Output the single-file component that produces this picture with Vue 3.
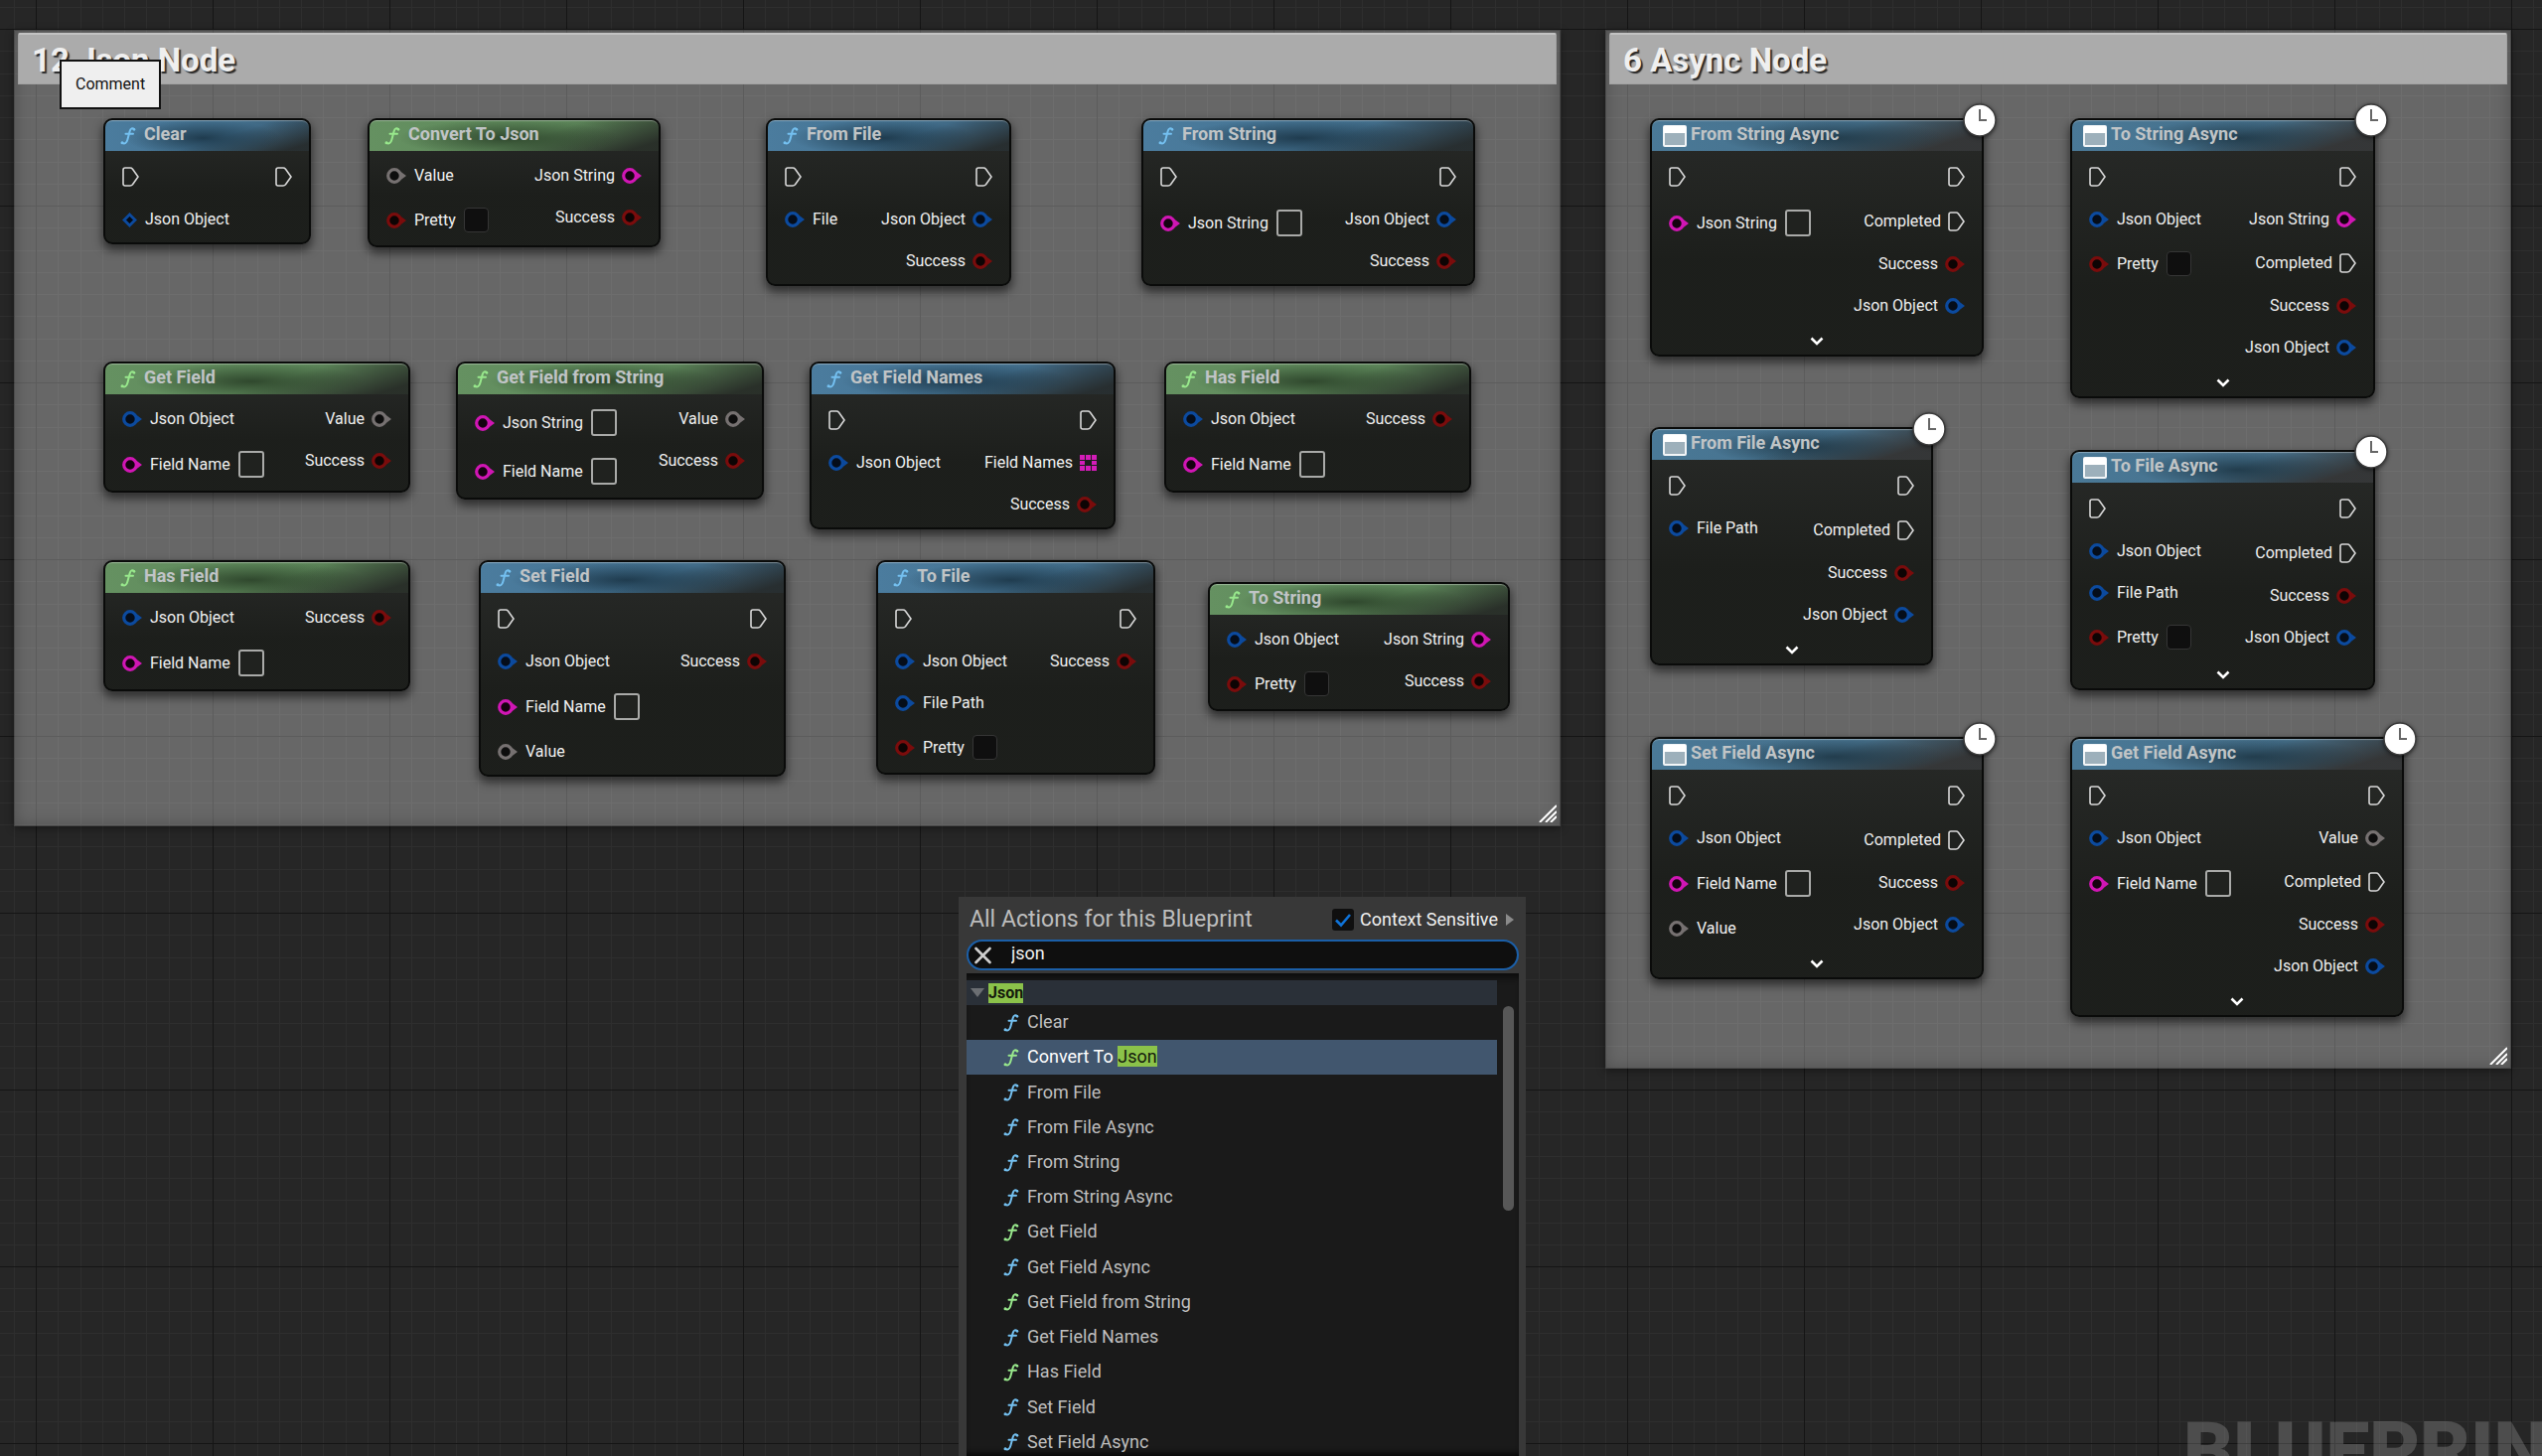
<script setup>
import { ref } from 'vue'

const comments = [
  { title: '12 Json Node', x: 14, y: 30, w: 1557, h: 802 },
  { title: '6 Async Node', x: 1616, y: 30, w: 912, h: 1046 },
]

const exec = { kind: 'exec' }
const done = { kind: 'exec', label: 'Completed' }
const object = { kind: 'object', label: 'Json Object' }
const value = { kind: 'wild', label: 'Value' }
const success = { kind: 'bool', label: 'Success' }
const jsonOut = { kind: 'string', label: 'Json String' }
const jsonIn = { kind: 'string', label: 'Json String', control: 'text' }
const fieldName = { kind: 'string', label: 'Field Name', control: 'text' }
const filePath = { kind: 'object', label: 'File Path' }
const pretty = { kind: 'bool', label: 'Pretty', control: 'check' }

const nodes = [
  { title: 'Clear', tone: 'blue', x: 104, y: 119, w: 209, ins: [exec, { kind: 'reference', label: 'Json Object' }], outs: [exec] },
  { title: 'Convert To Json', tone: 'green', x: 370, y: 119, w: 295, ins: [value, pretty], outs: [jsonOut, success] },
  { title: 'From File', tone: 'blue', x: 771, y: 119, w: 247, ins: [exec, { kind: 'object', label: 'File' }], outs: [exec, object, success] },
  { title: 'From String', tone: 'blue', x: 1149, y: 119, w: 336, ins: [exec, jsonIn], outs: [exec, object, success] },
  { title: 'Get Field', tone: 'green', x: 104, y: 364, w: 309, ins: [object, fieldName], outs: [value, success] },
  { title: 'Get Field from String', tone: 'green', x: 459, y: 364, w: 310, ins: [jsonIn, fieldName], outs: [value, success] },
  { title: 'Get Field Names', tone: 'blue', x: 815, y: 364, w: 308, ins: [exec, object], outs: [exec, { kind: 'array', label: 'Field Names' }, success] },
  { title: 'Has Field', tone: 'green', x: 1172, y: 364, w: 309, ins: [object, fieldName], outs: [success] },
  { title: 'Has Field', tone: 'green', x: 104, y: 564, w: 309, ins: [object, fieldName], outs: [success] },
  { title: 'Set Field', tone: 'blue', x: 482, y: 564, w: 309, ins: [exec, object, fieldName, value], outs: [exec, success] },
  { title: 'To File', tone: 'blue', x: 882, y: 564, w: 281, ins: [exec, object, filePath, pretty], outs: [exec, success] },
  { title: 'To String', tone: 'green', x: 1216, y: 586, w: 304, ins: [object, pretty], outs: [jsonOut, success] },
  { title: 'From String Async', tone: 'async', x: 1661, y: 119, w: 336, ins: [exec, jsonIn], outs: [exec, done, success, object] },
  { title: 'To String Async', tone: 'async', x: 2084, y: 119, w: 307, ins: [exec, object, pretty], outs: [exec, jsonOut, done, success, object] },
  { title: 'From File Async', tone: 'async', x: 1661, y: 430, w: 285, ins: [exec, filePath], outs: [exec, done, success, object] },
  { title: 'To File Async', tone: 'async', x: 2084, y: 453, w: 307, ins: [exec, object, filePath, pretty], outs: [exec, done, success, object] },
  { title: 'Set Field Async', tone: 'async', x: 1661, y: 742, w: 336, ins: [exec, object, fieldName, value], outs: [exec, done, success, object] },
  { title: 'Get Field Async', tone: 'async', x: 2084, y: 742, w: 336, ins: [exec, object, fieldName], outs: [exec, value, done, success, object] },
]

const sides = ['ins', 'outs']

const actions = [
  { name: 'Clear', tone: 'blue' },
  { name: 'Convert To ', hit: 'Json', tone: 'green', selected: true },
  { name: 'From File', tone: 'blue' },
  { name: 'From File Async', tone: 'blue' },
  { name: 'From String', tone: 'blue' },
  { name: 'From String Async', tone: 'blue' },
  { name: 'Get Field', tone: 'green' },
  { name: 'Get Field Async', tone: 'blue' },
  { name: 'Get Field from String', tone: 'green' },
  { name: 'Get Field Names', tone: 'blue' },
  { name: 'Has Field', tone: 'green' },
  { name: 'Set Field', tone: 'blue' },
  { name: 'Set Field Async', tone: 'blue' },
]

const query = ref('json')
const contextSensitive = ref(true)
const minor = [22, 45, 67, 89, 111, 134, 156]

const box = (o) => ({ left: o.x + 'px', top: o.y + 'px', width: o.w + 'px', height: o.h ? o.h + 'px' : null })
const rowClass = (pin) => pin.control ? 'row-' + pin.control : pin.kind !== 'exec' ? 'row-plain' : pin.label ? 'row-done' : 'row-exec'
</script>

<template>
  <main class="graph">
    <svg class="grid" aria-hidden="true">
      <defs>
        <pattern id="cells" x="36" y="29" width="178" height="178" patternUnits="userSpaceOnUse">
          <g fill="#2e2e2e">
            <rect v-for="m in minor" :key="'v' + m" :x="m" y="0" width="1" height="178" />
            <rect v-for="m in minor" :key="'h' + m" x="0" :y="m" width="178" height="1" />
          </g>
          <path d="M0 0H178V1H1V178H0Z" fill="#151515" />
        </pattern>
      </defs>
      <rect width="100%" height="100%" fill="url(#cells)" />
    </svg>

    <div class="watermark">BLUEPRINT</div>

    <section v-for="c in comments" :key="c.title" class="comment" :style="box(c)">
      <h2>{{ c.title }}</h2>
      <svg class="grip" viewBox="0 0 18 18" aria-hidden="true">
        <path d="M1 18 18 1M7 18 18 7M12 18 18 12" stroke="#fff" stroke-width="2" fill="none" />
      </svg>
    </section>

    <article v-for="(n, i) in nodes" :key="i" class="node" :class="n.tone" :style="box(n)">
      <header>
        <svg v-if="n.tone === 'async'" class="panel-icon" viewBox="0 0 24 22" aria-hidden="true">
          <rect x="1" y="1" width="22" height="20" rx="1" fill="#9db0bb" stroke="#f2f5f7" stroke-width="2" />
          <rect x="1" y="1" width="22" height="7" fill="#fff" />
        </svg>
        <svg v-else class="fn" viewBox="0 0 16 18" aria-hidden="true">
          <path d="M14 2.4C12.6.6 10.4 1 9.6 4.2L7.4 12.4C6.5 15.8 4.6 17.4 2 15.7M5.500 6.800H13" />
          <circle cx="14" cy="2.200" r="1.300" /><circle cx="2" cy="15.700" r="1.500" />
        </svg>
        <h3>{{ n.title }}</h3>
      </header>

      <div class="pins">
        <ul v-for="side in sides" :key="side" :class="side">
          <li v-for="(p, k) in n[side]" :key="k" :class="rowClass(p)">
            <svg v-if="p.kind === 'exec'" class="pin" width="17" height="20" viewBox="0 0 17 20">
              <path d="M1 3Q1 1 3 1H8Q9.500 1 10.500 2.200L16 10L10.500 17.800Q9.500 19 8 19H3Q1 19 1 17Z" fill="none" stroke="#d8d8d8" stroke-width="1.600" />
            </svg>
            <svg v-else-if="p.kind === 'reference'" class="pin" width="15" height="15" viewBox="0 0 15 15">
              <path d="M7.500 2 13 7.500 7.500 13 2 7.500Z" fill="#040a14" stroke="#0c4a9e" stroke-width="2.800" />
            </svg>
            <svg v-else-if="p.kind === 'array'" class="pin" width="17" height="16" viewBox="0 0 17 16">
              <path d="M0 0h5v5H0zM6 0h5v5H6zM12 0h5v5h-5zM0 6h5v4H0zM12 6h5v4h-5zM0 11h5v5H0zM6 11h5v5H6zM12 11h5v5h-5z" fill="#d41cb8" />
            </svg>
            <svg v-else class="pin" :class="p.kind" width="20" height="16" viewBox="0 0 20 16">
              <path d="M14 3.500 20 8 14 12.500Z" />
              <circle cx="8" cy="8" r="6.300" />
            </svg>
            <template v-if="p.label">
              <label v-if="p.control" :for="`pin-${i}-${k}`">{{ p.label }}</label>
              <span v-else>{{ p.label }}</span>
            </template>
            <input v-if="p.control === 'text'" :id="`pin-${i}-${k}`" type="text" class="text-box">
            <input v-if="p.control === 'check'" :id="`pin-${i}-${k}`" type="checkbox" class="tick">
          </li>
        </ul>
      </div>

      <template v-if="n.tone === 'async'">
        <button class="expand" type="button" aria-label="Show advanced pins">
          <svg width="14" height="9" viewBox="0 0 14 9"><path d="M1.500 1.500 7 7 12.500 1.500" fill="none" stroke="#fff" stroke-width="2.600" /></svg>
        </button>
        <svg class="clock" viewBox="0 0 34 34" aria-hidden="true">
          <circle cx="17" cy="17" r="16" fill="#fff" stroke="#3a3a3a" stroke-width="1.500" />
          <path d="M17 6V17H24" fill="none" stroke="#666" stroke-width="2" />
        </svg>
      </template>
    </article>

    <div class="tooltip" role="tooltip">Comment</div>

    <section class="palette">
      <div class="palette-head">
        <h1>All Actions for this Blueprint</h1>
        <input id="context" v-model="contextSensitive" type="checkbox">
        <label for="context">Context Sensitive</label>
        <button type="button" aria-label="Context options">
          <svg width="8" height="12" viewBox="0 0 8 12"><path d="M0 0 8 6 0 12Z" fill="#8a8a8a" /></svg>
        </button>
      </div>
      <div class="search">
        <button type="button" aria-label="Clear search" @click="query = ''">
          <svg width="17" height="18" viewBox="0 0 17 18"><path d="M1.500 2 15.500 16M15.500 2 1.500 16" stroke="#cfcfcf" stroke-width="2.600" stroke-linecap="round" /></svg>
        </button>
        <input v-model="query" type="text" aria-label="Search actions">
      </div>
      <div class="results">
        <div class="rows">
          <button class="category" type="button">
            <svg width="14" height="9" viewBox="0 0 14 9"><path d="M0 0H14L7 9Z" fill="#6b6e72" /></svg>
            <mark>Json</mark>
          </button>
          <ul>
            <li v-for="a in actions" :key="a.name" :class="[a.tone, { selected: a.selected }]">
              <svg class="fn" viewBox="0 0 16 18" aria-hidden="true">
                <path d="M14 2.4C12.6.6 10.4 1 9.6 4.2L7.4 12.4C6.5 15.8 4.6 17.4 2 15.7M5.500 6.800H13" />
                <circle cx="14" cy="2.200" r="1.300" /><circle cx="2" cy="15.700" r="1.500" />
              </svg>
              <span class="name">{{ a.name }}<mark v-if="a.hit">{{ a.hit }}</mark></span>
            </li>
          </ul>
        </div>
        <div class="scrollbar"></div>
      </div>
    </section>
  </main>
</template>

<style>
body {
  margin: 0;
  background: #262626;
}
</style>

<style scoped>
* {
  box-sizing: border-box;
}

.graph {
  position: relative;
  height: 100vh;
  overflow: hidden;
  background: #262626;
  color: #f0f0f0;
  font: 16px/20px Roboto, sans-serif;
}

h1, h2, h3, ul {
  margin: 0;
  padding: 0;
  list-style: none;
}

button {
  display: flex;
  align-items: center;
  justify-content: center;
  padding: 0;
  border: 0;
  background: none;
  color: inherit;
  font: inherit;
}

input {
  appearance: none;
  margin: 0;
}

svg {
  display: block;
  flex: none;
}

.grid {
  position: absolute;
  inset: 0;
  width: 100%;
  height: 100%;
}

.watermark {
  position: absolute;
  left: 2198px;
  top: 1416px;
  color: rgba(255, 255, 255, 0.18);
  font-weight: 900;
  font-size: 78px;
  line-height: 90px;
}

.comment {
  position: absolute;
  padding: 3px 4px;
  background: rgba(227, 227, 227, 0.35);
  box-shadow: inset 0 0 0 1px rgba(0, 0, 0, 0.2), inset 0 0 16px rgba(0, 0, 0, 0.25), 0 2px 8px rgba(0, 0, 0, 0.4);
}

.comment h2 {
  height: 52px;
  padding-left: 13px;
  border: 1px solid #a2a2a2;
  border-top: 2px solid #c2c2c2;
  border-radius: 2px 2px 0 0;
  background: #ababab;
  color: #efefef;
  font-weight: 700;
  font-size: 33px;
  line-height: 52px;
  text-shadow: 2px 2px 1px #2a2a2a;
}

.grip {
  position: absolute;
  right: 4px;
  bottom: 4px;
  width: 18px;
  height: 18px;
}

.tooltip {
  position: absolute;
  left: 60px;
  top: 60px;
  padding: 13px 14px;
  border: 2px solid #111;
  background: #efefef;
  color: #111;
}

.node {
  position: absolute;
  border: 2px solid #0a0b0a;
  border-radius: 9px;
  background: linear-gradient(rgba(39, 41, 39, 0.98), rgba(27, 29, 26, 0.98) 60%);
  box-shadow: 0 5px 10px 1px rgba(0, 0, 0, 0.55);
}

.node header {
  display: flex;
  align-items: center;
  height: 31px;
  padding-left: 15px;
  border-radius: 7px 7px 0 0;
  box-shadow: inset 0 2px 1px -1px rgba(255, 255, 255, 0.35);
}

.blue header {
  background:
    radial-gradient(ellipse 38% 60% at 48% 58%, rgba(22, 46, 62, 0.8), transparent),
    linear-gradient(163deg, transparent 56%, rgba(38, 42, 42, 0.92) 92%),
    linear-gradient(90deg, #4b7c9e, #44718f 60%, #3b5f78);
}

.green header {
  background:
    radial-gradient(ellipse 38% 60% at 48% 58%, rgba(36, 56, 34, 0.8), transparent),
    linear-gradient(163deg, transparent 56%, rgba(38, 42, 38, 0.92) 92%),
    linear-gradient(90deg, #659161, #5d875a 60%, #52754f);
}

.async header {
  padding-left: 11px;
  background:
    radial-gradient(ellipse 34% 60% at 55% 58%, rgba(26, 50, 64, 0.8), transparent),
    linear-gradient(163deg, transparent 52%, rgba(52, 52, 52, 0.95) 86%),
    linear-gradient(90deg, #4a7997, #456f8a 60%, #446478);
}

h3 {
  margin-bottom: 3px;
  color: #c0c4c6;
  font-weight: 700;
  font-size: 18px;
  line-height: 24px;
  white-space: nowrap;
}

.fn {
  width: 16px;
  height: 18px;
  margin-right: 8px;
  fill: none;
  stroke: currentColor;
  stroke-width: 2;
  stroke-linecap: round;
}

.fn circle {
  fill: currentColor;
  stroke: none;
}

.blue .fn {
  color: #74c0f0;
}

.green .fn {
  color: #98e88c;
}

.panel-icon {
  width: 24px;
  height: 22px;
  margin-right: 4px;
}

.pins {
  display: flex;
  justify-content: space-between;
  padding: 4px 17px 2px;
}

.async .pins {
  padding-bottom: 0;
}

.pins li {
  display: flex;
  align-items: center;
  gap: 8px;
  white-space: nowrap;
}

.outs li {
  flex-direction: row-reverse;
  gap: 7px;
}

.row-plain { height: 42px; }
.row-exec { height: 44px; }
.row-done { height: 45px; }
.row-check { height: 47px; }
.row-text { height: 49px; }

.pin circle {
  fill: #080808;
  stroke-width: 3.2;
}

.object circle { stroke: #0c4a9e; fill: #050d1a; }
.object path { fill: #0c4a9e; }
.bool circle { stroke: #7a0c0c; fill: #0d0404; }
.bool path { fill: #7a0c0c; }
.string circle { stroke: #d016b4; fill: #14020f; }
.string path { fill: #d016b4; }
.wild circle { stroke: #767171; fill: #0d0d0d; }
.wild path { fill: #767171; }

.text-box {
  width: 26px;
  height: 27px;
  padding: 0;
  border: 2px solid #a9aaa8;
  border-radius: 3px;
  background: #20221f;
  color: #fff;
  font: inherit;
}

.tick {
  width: 25px;
  height: 25px;
  border: 1px solid #353535;
  border-radius: 4px;
  background: #0f0f0f;
}

.expand {
  width: 100%;
  height: 28px;
}

.clock {
  position: absolute;
  right: -15px;
  top: -17px;
  width: 34px;
  height: 34px;
  filter: drop-shadow(0 1px 2px rgba(0, 0, 0, 0.6));
}

.palette {
  position: absolute;
  left: 965px;
  top: 903px;
  bottom: 0;
  width: 571px;
  display: flex;
  flex-direction: column;
  padding: 0 7px 0 8px;
  background: #383838;
  font-size: 18px;
  line-height: 24px;
}

.palette-head {
  display: flex;
  flex: none;
  align-items: center;
  height: 43px;
  padding: 3px 5px 0 3px;
}

.palette-head h1 {
  margin-right: auto;
  color: #bdbdbd;
  font-weight: 400;
  font-size: 23px;
}

.palette-head input {
  width: 22px;
  height: 22px;
  margin-right: 6px;
  border-radius: 3px;
  background: #0f0f0f;
}

.palette-head input:checked {
  background: #0f0f0f url("data:image/svg+xml,%3Csvg xmlns='http://www.w3.org/2000/svg' viewBox='0 0 22 22'%3E%3Cpath d='M4 11.500 9 16.500 18 6' fill='none' stroke='%230f73d8' stroke-width='2.600'/%3E%3C/svg%3E");
}

.palette-head button {
  margin-left: 8px;
}

.search {
  display: flex;
  flex: none;
  align-items: center;
  height: 31px;
  padding-left: 6px;
  border: 2px solid #1b5fa8;
  border-radius: 16px;
  background: #0f0f0f;
}

.search input {
  flex: 1;
  height: 24px;
  margin-bottom: 4px;
  padding: 0 0 0 20px;
  border: 0;
  outline: 0;
  background: none;
  color: #f0f0f0;
  font: inherit;
}

.results {
  display: flex;
  flex: 1;
  min-height: 0;
  margin-top: 3px;
  padding-top: 7px;
  overflow: hidden;
  background: #1a1a1a;
  box-shadow: inset 0 8px 6px -4px #0c0c0c, inset 0 -8px 6px -6px #060606;
}

.rows {
  flex: 1;
}

.rows ul {
  display: grid;
  grid-template-rows: repeat(13, 1fr);
  height: 458px;
}

.rows li {
  display: flex;
  align-items: center;
  padding-left: 37px;
  color: #bfbfbf;
}

.rows .name {
  padding-bottom: 1px;
  white-space: pre;
}

.rows li.selected {
  background: #41566e;
  color: #fff;
}

.category {
  justify-content: flex-start;
  gap: 4px;
  width: 100%;
  height: 25px;
  padding-left: 4px;
  background: #2a3038;
  font-weight: 700;
  font-size: 16px;
  line-height: 20px;
}

mark {
  background: #8bc24a;
  color: #141a0c;
}

.scrollbar {
  flex: none;
  width: 11px;
  height: 206px;
  margin: 26px 5px 0 6px;
  border-radius: 6px;
  background: #575757;
}
</style>
